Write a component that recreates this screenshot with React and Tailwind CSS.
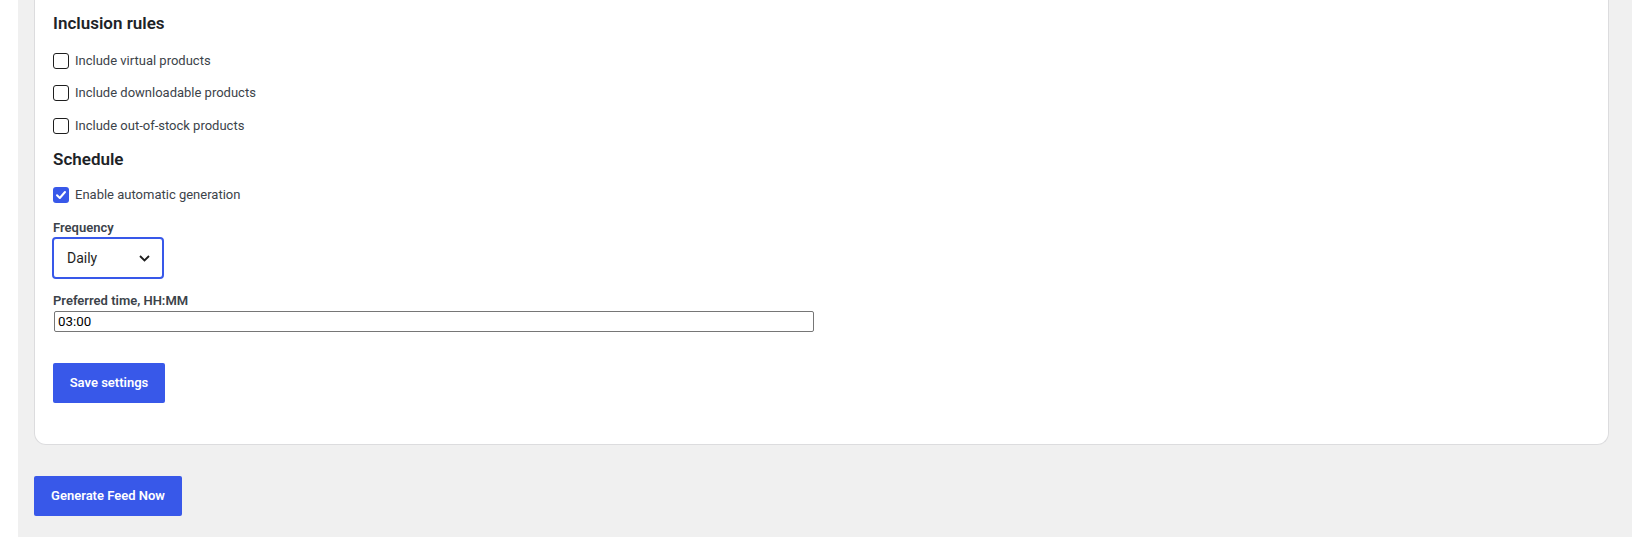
import React from 'react';

const font = { fontFamily: 'Roboto, "Liberation Sans", Arial, sans-serif' };

function Checkbox({ label, checked, className }) {
    return (
        <label className={`flex items-center h-4 ${className}`}>
            <span
                className={
                    checked
                        ? 'w-4 h-4 rounded-[3px] bg-[#3858e9] flex items-center justify-center'
                        : 'w-4 h-4 rounded-[3px] border-[1.5px] border-[#1e1e1e] bg-white'
                }
            >
                {checked && (
                    <svg width="12" height="12" viewBox="0 0 12 12" fill="none">
                        <path d="M2 6.2 L4.8 9 L10 3" stroke="white" strokeWidth="2" strokeLinecap="round" strokeLinejoin="round" />
                    </svg>
                )}
            </span>
            <span className="ml-[6px] text-[13px] text-[#3c434a] leading-4">{label}</span>
        </label>
    );
}

export default function App() {
    return (
        <div className="flex h-[537px] bg-white overflow-hidden" style={font}>
            <div className="w-[18px] shrink-0" />
            <div className="w-[1614px] shrink-0 bg-[#f0f0f0] pl-4">
                {/* settings card */}
                <div className="w-[1575px] bg-white border border-t-0 border-[#dcdcde] rounded-b-xl pl-[18px] pt-[12px] pb-[41px]">
                    <h2 className="text-[17px] leading-[22px] font-semibold text-[#1d2327]">Inclusion rules</h2>
                    <Checkbox className="mt-[19px]" label="Include virtual products" />
                    <Checkbox className="mt-[16px]" label="Include downloadable products" />
                    <Checkbox className="mt-[17px]" label="Include out-of-stock products" />

                    <h2 className="mt-[14px] text-[17px] leading-[22px] font-semibold text-[#1d2327]">Schedule</h2>
                    <Checkbox className="mt-[17px]" checked label="Enable automatic generation" />

                    <div className="mt-[17px] text-[13px] leading-4 font-semibold text-[#3c434a]">Frequency</div>
                    <div className="mt-[1px] -ml-px w-[112px] h-[42px] border-2 border-[#3858e9] rounded-[4px] flex items-center justify-between pl-[13px] pr-[12px]">
                        <span className="text-[14px] text-[#1e1e1e]">Daily</span>
                        <svg width="11" height="7" viewBox="0 0 11 7" fill="none">
                            <path d="M1 1 L5.5 5.5 L10 1" stroke="#1e1e1e" strokeWidth="1.8" />
                        </svg>
                    </div>

                    <div className="mt-[14px] text-[13px] leading-4 font-semibold text-[#3c434a]">Preferred time, HH:MM</div>
                    <div className="mt-[2px] ml-px w-[760px] h-[21px] border border-[#767676] rounded-[2px] flex items-center px-[3px]">
                        <span className="text-[13.33px] text-black">03:00</span>
                    </div>

                    <button className="mt-[31px] w-[112px] h-10 bg-[#3858e9] rounded-[2px] text-white text-[13px] font-semibold">
                        Save settings
                    </button>
                </div>

                <button className="mt-[31px] w-[148px] h-10 bg-[#3858e9] rounded-[2px] text-white text-[13px] font-semibold">
                    Generate Feed Now
                </button>
            </div>
        </div>
    );
}
